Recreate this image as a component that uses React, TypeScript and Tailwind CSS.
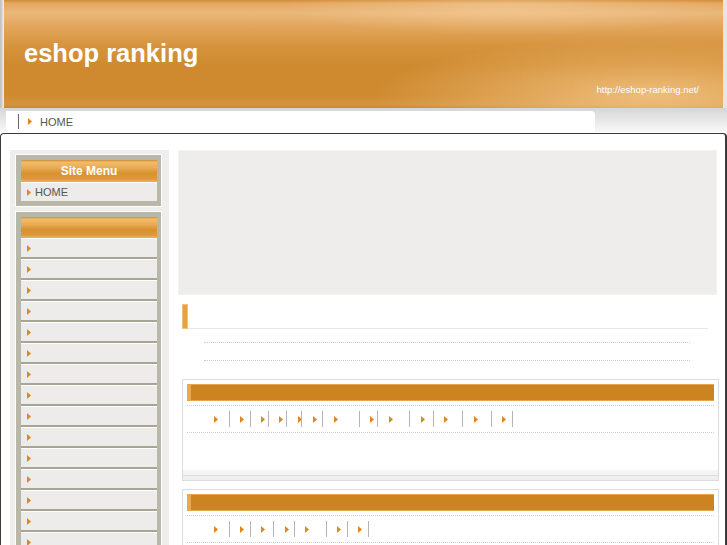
import React from "react";

const Arrow = () => (
  <svg width="4" height="7" viewBox="0 0 4 7" className="shrink-0">
    <polygon points="0,0 4,3.5 0,7" fill="#e0871c" />
  </svg>
);

// [arrow left, separator x] for each empty link, page coordinates
const row1: [number, number][] = [
  [214, 229], [240, 250], [261, 268], [279, 286], [298, 301], [313, 322], [334, 359],
  [370, 377], [389, 409], [421, 433], [444, 462], [474, 491], [502, 512],
];
const row2: [number, number][] = [
  [214, 229], [240, 250], [261, 273], [285, 294], [305, 326], [337, 347], [358, 368],
];

const LinkRow = ({ links }: { links: [number, number][] }) => {
  let x = 187;
  return (
    <div className="mt-[4px] flex h-[28px] items-center border-y border-dotted border-[#cfcfcf]">
      {links.map(([a, s], i) => {
        const ml = a - x;
        const sl = s - (a + 4);
        x = s + 1;
        return (
          <div key={i} className="flex items-center" style={{ marginLeft: ml }}>
            <Arrow />
            <span className="h-[16px] w-px bg-[#b4b4b4]" style={{ marginLeft: sl }} />
          </div>
        );
      })}
    </div>
  );
};

const CategoryBox = ({ links }: { links: [number, number][] }) => (
  <div className="ml-[4px] w-[537px] border border-[#dcdcdc]">
    <div className="px-[4px] pt-[4px]">
      <div className="flex h-[17px] border-y border-[#e4a650] bg-[#cb8420]">
        <div className="w-[4px] bg-[#eaa950]" />
      </div>
      <LinkRow links={links} />
    </div>
    <div className="h-[37px]" />
    <div className="h-[5px] bg-[#f4f4f4]" />
    <div className="h-px bg-[#dfdfdf]" />
    <div className="h-[4px] bg-[#efefef]" />
  </div>
);

const menuHead =
  "bg-[linear-gradient(180deg,#cf8d3a_0%,#f0bd6c_10%,#eaab54_35%,#d8922e_60%,#dc993a_85%,#e9b262_100%)]";

export default function App() {
  const items = Array.from({ length: 15 });

  return (
    <div className="h-[545px] w-[727px] overflow-hidden bg-white font-['Liberation_Sans',Arial,sans-serif]">
      {/* header */}
      <div className="flex h-[108px]">
        <div className="w-[4px] bg-[linear-gradient(90deg,#bdbdbd,#d9d9d9_60%,#f4f4f4)]" />
        <div className="flex flex-1 flex-col bg-[radial-gradient(ellipse_55%_75%_at_90%_88%,rgba(246,202,142,0.8),rgba(246,202,142,0)_70%),radial-gradient(ellipse_45%_40%_at_70%_5%,rgba(255,230,190,0.35),rgba(255,230,190,0)_70%),linear-gradient(180deg,#cf8a35_0%,#e4a862_3%,#eab77a_12%,#e2a55c_25%,#d6943e_42%,#cf8a2f_60%,#cf8a2f_88%,#d4943f_97%,#c98530_100%)]">
          <h1 className="pl-[20px] pt-[41px] text-[25.5px] font-bold leading-[25px] text-white">
            eshop ranking
          </h1>
          <p className="mr-[24px] mt-[18px] self-end text-[9.5px] leading-[11px] text-white">
            http://eshop-ranking.net/
          </p>
        </div>
        <div className="w-[4px] bg-[#e6e6e6]" />
      </div>

      {/* breadcrumb */}
      <div className="flex h-[24px] bg-[linear-gradient(180deg,#d6d6d6,#f8f8f8)]">
        <div className="ml-[6px] mt-[3px] flex h-[21px] w-[589px] items-center rounded-tr-[4px] bg-white">
          <span className="ml-[12px] h-[15px] w-px bg-[#666]" />
          <span className="ml-[9px]">
            <Arrow />
          </span>
          <span className="ml-[8px] text-[11px] leading-[12px] text-[#555]">HOME</span>
        </div>
      </div>

      {/* main */}
      <div className="mt-px flex h-[460px] rounded-t-[4px] border-l border-r-2 border-t border-[#3a3a3a] pl-[9px] pr-[6px] pt-[16px]">
        {/* sidebar */}
        <div className="w-[159px] bg-[#efeeec] px-[5px] pt-[4px]">
          <div className="w-[147px] border border-white bg-[#b8b7a8] pb-[5px] pl-[5px] pr-[4px] pt-[5px]">
            <div className={`flex h-[22px] items-center justify-center text-[12px] font-bold text-white ${menuHead}`}>
              Site Menu
            </div>
            <div className="flex h-[19px] items-center border-t border-white bg-[#edecea] pl-[6px]">
              <Arrow />
              <span className="ml-[4px] text-[11px] leading-[12px] text-[#555]">HOME</span>
            </div>
          </div>

          <div className="mt-[4px] w-[147px] border border-white bg-[#b8b7a8] pl-[5px] pr-[4px] pt-[5px]">
            <div className={`h-[21px] ${menuHead}`} />
            {items.map((_, i) => (
              <div
                key={i}
                className="flex h-[21px] items-center border-b-2 border-t border-b-[#a8a693] border-t-white bg-[#edecea] pl-[6px]"
              >
                <Arrow />
              </div>
            ))}
          </div>
        </div>

        {/* content */}
        <div className="ml-[9px] flex-1">
          <div className="mr-[2px] h-[145px] border border-[#f3f2f0] bg-[#eeedeb]" />

          <div className="ml-[4px] mr-[11px] mt-[9px] flex h-[25px]">
            <div className="w-[6px] border border-[#f0c27e] bg-[#e8a23c]" />
            <div className="flex-1 border-b border-[#e6e6e6]" />
          </div>

          <div className="ml-[26px] mt-[13px] h-[18px] w-[486px] border-t border-dotted border-[#cccccc]" />
          <div className="ml-[26px] h-[19px] w-[486px] border-t border-dotted border-[#cccccc]" />

          <CategoryBox links={row1} />
          <div className="h-[8px]" />
          <CategoryBox links={row2} />
        </div>
      </div>
    </div>
  );
}
